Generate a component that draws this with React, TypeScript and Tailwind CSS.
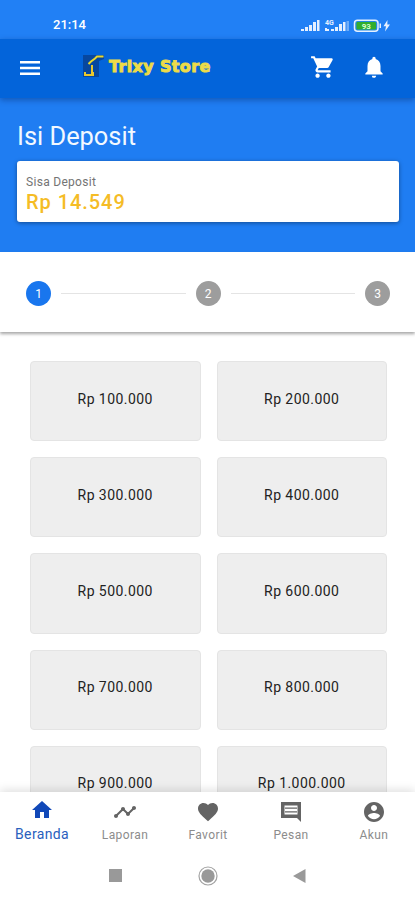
import type { ReactNode } from "react";
import { MdFavorite, MdNotifications, MdShoppingCart, MdTimeline } from "react-icons/md";

const amounts = [
  "Rp 100.000",
  "Rp 200.000",
  "Rp 300.000",
  "Rp 400.000",
  "Rp 500.000",
  "Rp 600.000",
  "Rp 700.000",
  "Rp 800.000",
  "Rp 900.000",
  "Rp 1.000.000",
];

const StatusBar = () => (
  <div className="flex h-[39px] shrink-0 items-center justify-between bg-[#2180f5] pl-[53px] pr-6 pt-[10px] text-white">
    <span className="text-[13px] font-medium leading-none">21:14</span>
    <svg width="91" height="16" viewBox="0 0 91 16" fill="#e6f0ff">
      {/* First SIM */}
      <path d="M1 14h3v-2H1zM5 14h3v-4H5zM9 14h3V8H9zM13 14h3V5h-3zM17 14h2.500V3H17z" />
      {/* Second SIM, weaker last bars */}
      <text x="25" y="7.500" fontSize="7" fontWeight="700">4G</text>
      <path d="M25 14v-3h2v1h2v2zM31 14h3v-2h-3zM35 14h3v-4h-3zM39 14h3V7h-3zM43 14h2.500V5H43z" />
      <path d="M46.500 14h2.500V4h-2.500z" opacity=".4" />
      {/* Battery */}
      <rect x="54.500" y="3.200" width="23.500" height="11" rx="3" fill="#238ae0" stroke="#e6f0ff" strokeWidth="1.500" />
      <rect x="56.500" y="5" width="19.500" height="7.400" rx="1" fill="#31ad2d" />
      <path d="M79.500 6.500H81v4.500h-1.500z" />
      <text x="66.300" y="11.500" fontSize="8" fontWeight="700" textAnchor="middle" fill="#d9ffd1">93</text>
      <path d="M87.500 3l-4 6.200h2.500L85 14.500l5-7h-2.700z" />
    </svg>
  </div>
);

const TrixyLogo = () => (
  <div className="flex items-center">
    <svg width="22" height="24" viewBox="0 0 22 24" fill="none">
      <path d="M0 1h21v4l-5 2v16H0z" fill="#07479f" />
      <path d="M5.500 10L8 7.500l4-3 2-2h6.500" stroke="#e9d82e" strokeWidth="2" />
      <path d="M9 11v9M1 21h10M2 18v4M10 18v4" stroke="#e9c82e" strokeWidth="2" />
    </svg>
    <span className="ml-1 whitespace-nowrap pt-0.5 font-['DejaVu_Sans'] text-[16px] font-bold leading-6 tracking-[0.35px] text-[#eddb48] [-webkit-text-stroke:0.9px_#eddb48]">
      Trixy Store
    </span>
  </div>
);

const AppBar = () => (
  <header className="relative z-10 flex h-[59px] shrink-0 items-center bg-[#0364da] pb-px pl-5 pr-[28px] text-white shadow-[0_2px_6px_rgba(0,30,90,0.4)]">
    <svg width="20" height="14" viewBox="0 0 20 14" fill="currentColor" className="shrink-0">
      <path d="M0 0h20v2.600H0zM0 5.700h20v2.600H0zM0 11.400h20V14H0z" />
    </svg>
    <div className="ml-[43px] flex-1 pb-1">
      <TrixyLogo />
    </div>
    <div className="flex gap-[25px] pb-0.5">
      <MdShoppingCart size={26} />
      <MdNotifications size={26} />
    </div>
  </header>
);

const DepositPanel = () => (
  <section className="h-[154px] shrink-0 bg-[#1f7df2] pl-[17px] pr-4 pt-5">
    <h1 className="h-[43px] text-[25.4px] leading-[36px] text-[#f2f8ff]">Isi Deposit</h1>
    <div className="h-[61px] rounded-[3px] bg-white px-[9px] pt-[13px] shadow-[0_1px_4px_rgba(0,0,0,0.4)]">
      <p className="text-xs leading-4 tracking-[0.3px] text-[#747474]">Sisa Deposit</p>
      <p className="text-xl font-medium leading-6 tracking-[0.95px] text-[#f5bc26]">Rp 14.549</p>
    </div>
  </section>
);

const StepDot = ({ step, active = false }: { step: number; active?: boolean }) => (
  <span
    className={`flex size-[25px] shrink-0 items-center justify-center rounded-full text-xs text-white ${
      active ? "bg-[#1976ee]" : "bg-[#9d9d9d]"
    }`}
  >
    {step}
  </span>
);

const Stepper = () => (
  <div className="flex h-[80px] shrink-0 items-center bg-white pl-[26px] pr-[25px] pt-[3px] shadow-[0_2px_3px_rgba(0,0,0,0.35)]">
    <StepDot step={1} active />
    <div className="mx-[10px] h-px flex-1 bg-[#e4e4e4]" />
    <StepDot step={2} />
    <div className="mx-[10px] h-px flex-1 bg-[#e4e4e4]" />
    <StepDot step={3} />
  </div>
);

const NavItem = ({ label, children, active = false }: { label: string; children: ReactNode; active?: boolean }) => (
  <div
    className={`flex flex-1 flex-col items-center pl-px ${active ? "pt-[6px] text-[#1148b8]" : "pt-2 text-[#646464]"}`}
  >
    {children}
    {active ? (
      <span className="mt-[3px] text-sm leading-[18px] tracking-[0.35px] text-[#2960bd]">{label}</span>
    ) : (
      <span className="mt-0.5 text-xs leading-[18px] tracking-[0.4px] text-[#8c8c8c]">{label}</span>
    )}
  </div>
);

const BottomNav = () => (
  <nav className="relative z-10 flex h-[58px] shrink-0 bg-white shadow-[0_-2px_9px_rgba(0,0,0,0.13)]">
    <NavItem label="Beranda" active>
      <svg width="24" height="24" viewBox="0 0 24 24" fill="currentColor">
        <path d="M10 20v-6h4v6h5v-8h3L12 3 2 12h3v8z" />
      </svg>
    </NavItem>
    <NavItem label="Laporan">
      <MdTimeline size={24} />
    </NavItem>
    <NavItem label="Favorit">
      <MdFavorite size={24} />
    </NavItem>
    <NavItem label="Pesan">
      <svg width="24" height="24" viewBox="0 0 24 24" fill="currentColor">
        <path fillRule="evenodd" d="M2 2h20v20l-4-4H2zM5.500 5.500v9h13v-9z" />
        <path d="M6 7.500h12v1.200H6zM6 11.300h12v1.200H6z" />
      </svg>
    </NavItem>
    <NavItem label="Akun">
      <svg width="24" height="24" viewBox="0 0 24 24" fill="currentColor">
        <path d="M12 2C6.480 2 2 6.480 2 12s4.480 10 10 10 10-4.480 10-10S17.520 2 12 2zm0 3c1.660 0 3 1.340 3 3s-1.340 3-3 3-3-1.340-3-3 1.340-3 3-3zm0 14.200c-2.500 0-4.710-1.280-6-3.220.03-1.990 4-3.080 6-3.080 1.990 0 5.970 1.090 6 3.080-1.290 1.940-3.500 3.220-6 3.220z" />
      </svg>
    </NavItem>
  </nav>
);

const SystemBar = () => (
  <div className="relative z-10 flex h-[50px] shrink-0 items-center justify-between bg-white px-[109px] pt-px">
    <div className="size-[13px] bg-[#999]" />
    <svg width="20" height="20" viewBox="0 0 20 20" fill="none">
      <circle cx="10" cy="10" r="9" stroke="#a3a3a3" strokeWidth="1.200" />
      <circle cx="10" cy="10" r="6.700" fill="#999" />
    </svg>
    <svg width="13" height="14" viewBox="0 0 13 14" fill="#999">
      <path d="M12.500 0v14L0 7z" />
    </svg>
  </div>
);

const App = () => {
  return (
    <div className="flex h-[900px] w-[415px] flex-col overflow-hidden bg-white font-[Roboto,sans-serif]">
      <StatusBar />
      <AppBar />
      <DepositPanel />
      <Stepper />
      <main className="min-h-0 flex-1 overflow-hidden">
        <div className="grid grid-cols-2 gap-4 pl-[30px] pr-[28px] pt-[29px]">
          {amounts.map((amount) => (
            <button
              key={amount}
              className="h-[80.2px] rounded-[4px] border border-[#e4e4e4] bg-[#eee] pb-[5px] text-sm tracking-[0.45px] text-[#222]"
            >
              {amount}
            </button>
          ))}
        </div>
      </main>
      <BottomNav />
      <SystemBar />
    </div>
  );
};

export default App;
